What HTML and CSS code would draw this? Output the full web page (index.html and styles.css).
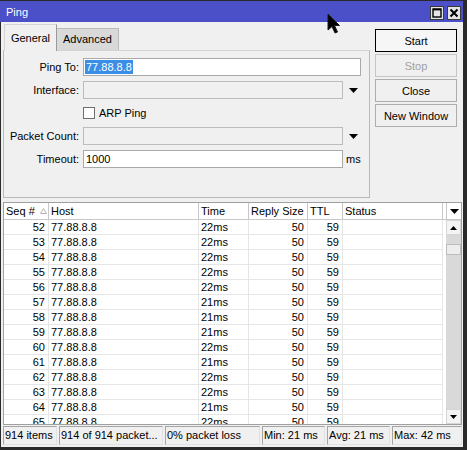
FILE: index.html
```html
<!DOCTYPE html>
<html lang="en">
<head>
    <meta charset="UTF-8">
    <title>Ping</title>
    <link rel="stylesheet" href="styles.css">
</head>
<body>

<div class="window">
    <div class="titlebar">
        <span class="title">Ping</span>
        <div class="title-buttons">
            <span class="tbtn">
                <svg width="12" height="12" viewBox="0 0 12 12"><rect x="2" y="2" width="8" height="8" fill="none" stroke="#000" stroke-width="1.4"/><line x1="2" y1="2.6" x2="10" y2="2.6" stroke="#000" stroke-width="1.6"/></svg>
            </span>
            <span class="tbtn">
                <svg width="12" height="12" viewBox="0 0 12 12"><path d="M2.5 2.5 L9.5 9.5 M9.5 2.5 L2.5 9.5" stroke="#000" stroke-width="2"/></svg>
            </span>
        </div>
    </div>

    <div class="content">
        <div class="top">
            <div class="tabs-area">
                <div class="tabs">
                    <div class="tab active general">General</div>
                    <div class="tab advanced">Advanced</div>
                </div>
                <div class="panel">
                    <div class="frow">
                        <label>Ping To:</label>
                        <div class="field long"><span class="sel">77.88.8.8</span></div>
                    </div>
                    <div class="frow">
                        <label>Interface:</label>
                        <div class="field short off"></div>
                        <span class="drop"><svg width="9" height="5" viewBox="0 0 9 5"><polygon points="0,0 9,0 4.5,5" fill="#000"/></svg></span>
                    </div>
                    <div class="frow">
                        <label></label>
                        <span class="check"></span>
                        <span>ARP Ping</span>
                    </div>
                    <div class="frow">
                        <label>Packet Count:</label>
                        <div class="field short off"></div>
                        <span class="drop"><svg width="9" height="5" viewBox="0 0 9 5"><polygon points="0,0 9,0 4.5,5" fill="#000"/></svg></span>
                    </div>
                    <div class="frow">
                        <label>Timeout:</label>
                        <div class="field short">1000</div>
                        <span class="unit">ms</span>
                    </div>
                </div>
            </div>
            <div class="actions">
                <div class="btn default">Start</div>
                <div class="btn off">Stop</div>
                <div class="btn">Close</div>
                <div class="btn">New Window</div>
            </div>
        </div>

        <div class="list">
            <div class="grid">
                <div class="hrow">
                    <div class="c">Seq # <svg class="sort" width="7" height="6" viewBox="0 0 7 6"><polygon points="0.5,5.5 6.5,5.5 3.5,0.5" fill="none" stroke="#b4b4b4"/></svg></div>
                    <div class="c">Host</div>
                    <div class="c">Time</div>
                    <div class="c">Reply Size</div>
                    <div class="c">TTL</div>
                    <div class="c">Status</div>
                    <div class="c fill"></div>
                </div>
                <div class="row"><div class="c num">52</div><div class="c">77.88.8.8</div><div class="c">22ms</div><div class="c num">50</div><div class="c num">59</div><div class="c"></div><div class="c fill"></div></div>
                <div class="row"><div class="c num">53</div><div class="c">77.88.8.8</div><div class="c">22ms</div><div class="c num">50</div><div class="c num">59</div><div class="c"></div><div class="c fill"></div></div>
                <div class="row"><div class="c num">54</div><div class="c">77.88.8.8</div><div class="c">22ms</div><div class="c num">50</div><div class="c num">59</div><div class="c"></div><div class="c fill"></div></div>
                <div class="row"><div class="c num">55</div><div class="c">77.88.8.8</div><div class="c">22ms</div><div class="c num">50</div><div class="c num">59</div><div class="c"></div><div class="c fill"></div></div>
                <div class="row"><div class="c num">56</div><div class="c">77.88.8.8</div><div class="c">22ms</div><div class="c num">50</div><div class="c num">59</div><div class="c"></div><div class="c fill"></div></div>
                <div class="row"><div class="c num">57</div><div class="c">77.88.8.8</div><div class="c">21ms</div><div class="c num">50</div><div class="c num">59</div><div class="c"></div><div class="c fill"></div></div>
                <div class="row"><div class="c num">58</div><div class="c">77.88.8.8</div><div class="c">21ms</div><div class="c num">50</div><div class="c num">59</div><div class="c"></div><div class="c fill"></div></div>
                <div class="row"><div class="c num">59</div><div class="c">77.88.8.8</div><div class="c">21ms</div><div class="c num">50</div><div class="c num">59</div><div class="c"></div><div class="c fill"></div></div>
                <div class="row"><div class="c num">60</div><div class="c">77.88.8.8</div><div class="c">22ms</div><div class="c num">50</div><div class="c num">59</div><div class="c"></div><div class="c fill"></div></div>
                <div class="row"><div class="c num">61</div><div class="c">77.88.8.8</div><div class="c">21ms</div><div class="c num">50</div><div class="c num">59</div><div class="c"></div><div class="c fill"></div></div>
                <div class="row"><div class="c num">62</div><div class="c">77.88.8.8</div><div class="c">22ms</div><div class="c num">50</div><div class="c num">59</div><div class="c"></div><div class="c fill"></div></div>
                <div class="row"><div class="c num">63</div><div class="c">77.88.8.8</div><div class="c">22ms</div><div class="c num">50</div><div class="c num">59</div><div class="c"></div><div class="c fill"></div></div>
                <div class="row"><div class="c num">64</div><div class="c">77.88.8.8</div><div class="c">21ms</div><div class="c num">50</div><div class="c num">59</div><div class="c"></div><div class="c fill"></div></div>
                <div class="row"><div class="c num">65</div><div class="c">77.88.8.8</div><div class="c">22ms</div><div class="c num">50</div><div class="c num">59</div><div class="c"></div><div class="c fill"></div></div>
            </div>
            <div class="vscroll">
                <div class="vs-head"><svg width="9" height="5" viewBox="0 0 9 5"><polygon points="0,0 9,0 4.5,5" fill="#000"/></svg></div>
                <div class="vs-btn"><svg width="7" height="4" viewBox="0 0 7 4"><polygon points="0,4 7,4 3.5,0" fill="#000"/></svg></div>
                <div class="vs-track"><div class="vs-thumb"></div></div>
                <div class="vs-btn"><svg width="7" height="4" viewBox="0 0 7 4"><polygon points="0,0 7,0 3.5,4" fill="#000"/></svg></div>
            </div>
        </div>

        <div class="statusbar">
            <div class="cell w-items">914 items</div>
            <div class="cell w-sent">914 of 914 packet...</div>
            <div class="cell w-loss">0% packet loss</div>
            <div class="cell w-min">Min: 21 ms</div>
            <div class="cell w-avg">Avg: 21 ms</div>
            <div class="cell w-max">Max: 42 ms</div>
        </div>
    </div>

    <!-- mouse pointer left over the title bar -->
    <svg class="cursor" width="14" height="21" viewBox="0 0 14 21"><polygon points="1,1 1,17 5,13.5 8,20 10.5,19 7.5,12.5 12.5,12.5" fill="#000" stroke="#1a1a1a" stroke-width="1"/></svg>
</div>

</body>
</html>
```

FILE: styles.css
```css
* {
    box-sizing: border-box;
}

body {
    margin: 0;
    font-family: "Liberation Sans", Arial, sans-serif;
    font-size: 11px;
    color: #000;
    background: #fff;
}

.window {
    position: relative;
    width: 467px;
    height: 450px;
    background: #f0f0f0;
    border-top: 1px solid #2a2a2a;
    border-right: 4px solid #2a2a2a;
    border-bottom: 3px solid #2a2a2a;
    display: flex;
    flex-direction: column;
    overflow: hidden;
}

.titlebar {
    height: 21px;
    flex: none;
    background: #4b50c9;
    color: #fff;
    display: flex;
    align-items: center;
    justify-content: space-between;
    padding: 0 2px 0 6px;
    font-size: 11px;
}

.title-buttons {
    display: flex;
    gap: 3px;
    align-self: flex-start;
    margin-top: 5px;
}

.tbtn {
    width: 14px;
    height: 14px;
    background: #e4e4e4;
    border: 1px solid #3a3a3a;
    display: flex;
    align-items: center;
    justify-content: center;
}

.content {
    flex: 1;
    display: flex;
    flex-direction: column;
    border-left: 1px solid #2a2a2a;
    padding: 0 0 2px 2px;
}

/* upper part: tabs + buttons */
.top {
    display: flex;
    height: 176px;
    flex: none;
}

.tabs-area {
    width: 367px;
    padding-top: 2px;
    display: flex;
    flex-direction: column;
}

.tabs {
    display: flex;
    align-items: flex-end;
    height: 26px;
    padding-left: 1px;
}

.tab {
    height: 22px;
    line-height: 20px;
    text-align: center;
    border: 1px solid #b9b9b9;
    border-bottom: none;
    background: #d9d9d9;
}

.tab.general {
    width: 53px;
}

.tab.advanced {
    width: 62px;
    border-left: none;
}

.tab.active {
    height: 27px;
    line-height: 26px;
    margin-bottom: -1px;
    background: #f0f0f0;
    border-color: #d4d4d4 #9a9a9a #f0f0f0 #d4d4d4;
    position: relative;
    z-index: 1;
}

.panel {
    height: 148px;
    border: 1px solid #b9b9b9;
    border-top-color: #d4d4d4;
    padding-top: 7px;
}

.frow {
    display: flex;
    align-items: center;
    height: 18px;
    margin-bottom: 5px;
}

.frow label {
    width: 75px;
    margin-right: 4px;
    text-align: right;
}

.field {
    height: 18px;
    border: 1px solid #a9a9a9;
    background: #fff;
    padding: 0 2px;
    line-height: 16px;
}

.field.long {
    width: 278px;
    padding-left: 1px;
}

.field.short {
    width: 260px;
}

.field.off {
    background: #f0f0f0;
    border-color: #bcbcbc;
}

.sel {
    background: #3a8ee6;
    color: #fff;
    padding: 1px 1px;
}

.drop {
    width: 18px;
    display: flex;
    justify-content: center;
    margin-left: 1px;
}

.unit {
    margin-left: 3px;
}

.check {
    width: 12px;
    height: 12px;
    border: 1px solid #6f6f6f;
    background: #fff;
    margin-right: 4px;
}

.actions {
    width: 82px;
    margin-left: 5px;
    padding-top: 7px;
    display: flex;
    flex-direction: column;
    gap: 2px;
}

.btn {
    height: 23px;
    border: 1px solid #adadad;
    background: #f0f0f0;
    display: flex;
    align-items: center;
    justify-content: center;
}

.btn.default {
    border-color: #000;
    background: #f6f6f6;
}

.btn.off {
    color: #a0a0a0;
    border-color: #c6c6c6;
}

/* ping result list */
.list {
    margin-top: 4px;
    height: 223px;
    width: 459px;
    flex: none;
    border: 1px solid #a0a0a0;
    background: #fff;
    display: flex;
}

.grid {
    width: 442px;
    overflow: hidden;
}

.hrow,
.row {
    display: grid;
    grid-template-columns: 45px 150px 50px 59px 35px 100px 1fr;
}

.hrow {
    height: 17px;
    border-bottom: 1px solid #c8c8c8;
}

.hrow .c {
    border-right: 1px solid #c8c8c8;
    padding-left: 2px;
    line-height: 16px;
    white-space: nowrap;
}

.sort {
    margin-left: 2px;
    vertical-align: 1px;
}

.row {
    height: 15px;
}

.row .c {
    border-right: 1px solid #e6e6e6;
    border-bottom: 1px solid #e6e6e6;
    line-height: 14px;
    padding: 0 3px 0 2px;
    white-space: nowrap;
}

.c.fill {
    border-right: none;
}

.row .c.fill {
    border-bottom: none;
}

.num {
    text-align: right;
}

.vscroll {
    width: 15px;
    display: flex;
    flex-direction: column;
}

.vs-head {
    height: 17px;
    border-left: 1px solid #c8c8c8;
    border-bottom: 1px solid #c8c8c8;
    display: flex;
    align-items: center;
    justify-content: center;
}

.vs-btn {
    height: 15px;
    background: #f4f4f4;
    border: 1px solid #d6d6d6;
    display: flex;
    align-items: center;
    justify-content: center;
}

.vs-track {
    flex: 1;
    background: #d9d9d9;
}

.vs-thumb {
    margin-top: 9px;
    height: 11px;
    background: #ededed;
    border: 1px solid #bdbdbd;
}

/* status bar */
.statusbar {
    display: flex;
    gap: 2px;
    margin-top: 1px;
    height: 19px;
    width: 459px;
    flex: none;
}

.cell {
    border: 1px solid;
    border-color: #a5a5a5 #e2e2e2 #e2e2e2 #a5a5a5;
    padding-left: 1px;
    line-height: 17px;
    white-space: nowrap;
    overflow: hidden;
}

.w-items { width: 54px; }
.w-sent { width: 104px; }
.w-loss { width: 95px; }
.w-min { width: 63px; }
.w-avg { width: 63px; }
.w-max { flex: 1; }

.cursor {
    position: absolute;
    left: 327px;
    top: 12px;
}
```
